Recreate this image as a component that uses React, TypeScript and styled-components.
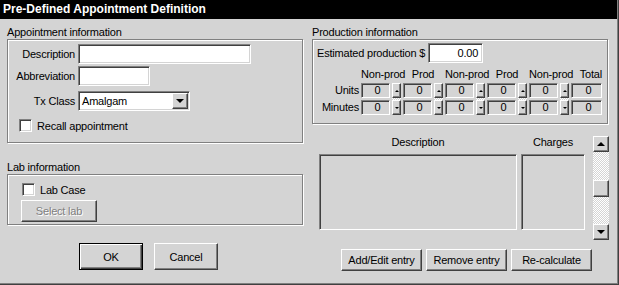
import * as React from "react";
import styled, { createGlobalStyle, css } from "styled-components";

const face = "#d4d4d4";
const shadow = "#808080";
const darkShadow = "#404040";

const GlobalStyle = createGlobalStyle`
  html, body {
    margin: 0;
    padding: 0;
    background: ${face};
  }
  body {
    font-family: "Liberation Sans", Arial, sans-serif;
    font-size: 11px;
    letter-spacing: -0.2px;
    color: #000;
  }
`;

const raised = css`
  border-style: solid;
  border-width: 1px;
  border-color: #fff ${darkShadow} ${darkShadow} #fff;
  box-shadow: inset -1px -1px ${shadow};
`;

const sunken = css`
  border-style: solid;
  border-width: 1px;
  border-color: ${shadow} #fff #fff ${shadow};
  box-shadow: inset 1px 1px ${darkShadow}, inset -1px -1px ${face};
`;

const hatch = css`
  background: repeating-conic-gradient(#fff 0 25%, ${face} 0 50%) 0 0 / 2px 2px;
`;

const Window = styled.div`
  width: 619px;
  height: 285px;
  box-sizing: border-box;
  padding: 0 2px 2px 0;
  background: ${face};
  box-shadow: inset -1px -1px ${darkShadow}, inset -2px -2px ${shadow};
  overflow: hidden;
`;

const TitleBar = styled.div`
  height: 19px;
  padding-left: 3px;
  background: #000;
  color: #fff;
  font-size: 12px;
  font-weight: bold;
  line-height: 19px;
  letter-spacing: 0;
`;

const Body = styled.div`
  display: flex;
  gap: 9px;
  padding: 7px 0 0 7px;
`;

const Column = styled.div<{ $w: number }>`
  width: ${(p) => p.$w}px;
  display: flex;
  flex-direction: column;
`;

const GroupLabel = styled.div<{ $mt?: number }>`
  height: 13px;
  line-height: 13px;
  margin-top: ${(p) => p.$mt || 0}px;
`;

const GroupBox = styled.div<{ $w: number; $h: number }>`
  box-sizing: border-box;
  width: ${(p) => p.$w}px;
  height: ${(p) => p.$h}px;
  border: 1px solid ${shadow};
  box-shadow: inset 1px 1px #fff, 1px 1px #fff;
  display: flex;
  flex-direction: column;
`;

const FieldRow = styled.div<{ $mt?: number }>`
  display: flex;
  align-items: center;
  height: 20px;
  margin-top: ${(p) => p.$mt || 0}px;
`;

const FieldLabel = styled.div`
  box-sizing: border-box;
  width: 70px;
  padding-right: 3px;
  text-align: right;
`;

const TextBox = styled.div<{ $w: number; $right?: boolean }>`
  box-sizing: border-box;
  width: ${(p) => p.$w}px;
  height: 20px;
  padding: 0 4px;
  background: #fff;
  line-height: 18px;
  text-align: ${(p) => (p.$right ? "right" : "left")};
  ${sunken};
`;

const SelectBox = styled.div`
  box-sizing: border-box;
  width: 112px;
  height: 20px;
  padding: 1px 1px 1px 3px;
  display: flex;
  align-items: center;
  justify-content: space-between;
  background: #fff;
  ${sunken};
`;

const ArrowButton = styled.div<{ $w: number; $h: number }>`
  box-sizing: border-box;
  width: ${(p) => p.$w}px;
  height: ${(p) => p.$h}px;
  display: flex;
  align-items: center;
  justify-content: center;
  background: ${face};
  ${raised};
`;

const Triangle = styled.span<{ $up?: boolean; $size: number }>`
  width: 0;
  height: 0;
  border-left: ${(p) => p.$size}px solid transparent;
  border-right: ${(p) => p.$size}px solid transparent;
  ${(p) =>
    p.$up
      ? css`border-bottom: ${p.$size}px solid #000;`
      : css`border-top: ${p.$size}px solid #000;`}
`;

const CheckRow = styled.div<{ $mt?: number; $pl: number }>`
  display: flex;
  align-items: center;
  gap: 5px;
  height: 13px;
  margin-top: ${(p) => p.$mt || 0}px;
  padding-left: ${(p) => p.$pl}px;
`;

const CheckBox = styled.span`
  box-sizing: border-box;
  width: 13px;
  height: 13px;
  background: #fff;
  ${sunken};
`;

const Button = styled.button<{ $w: number; $h: number; $default?: boolean }>`
  box-sizing: border-box;
  width: ${(p) => p.$w}px;
  height: ${(p) => p.$h}px;
  padding: 0;
  background: ${face};
  font: inherit;
  letter-spacing: inherit;
  color: #000;
  ${(p) =>
    p.$default
      ? css`
          border: 1px solid #000;
          box-shadow: inset 1px 1px #fff, inset -1px -1px ${darkShadow},
            inset -2px -2px ${shadow};
        `
      : raised};

  &:disabled {
    color: ${shadow};
    text-shadow: 1px 1px #fff;
  }
`;

const ButtonRow = styled.div<{ $mt: number; $gap: number }>`
  display: flex;
  gap: ${(p) => p.$gap}px;
  margin-top: ${(p) => p.$mt}px;
`;

const LeftButtons = styled(ButtonRow)`
  padding-left: 72px;
`;

const RightButtons = styled(ButtonRow)`
  justify-content: flex-end;
  padding-right: 17px;
`;

const Inset = styled.div<{ $pt?: number; $pl?: number }>`
  padding-top: ${(p) => p.$pt || 0}px;
  padding-left: ${(p) => p.$pl || 0}px;
`;

const EstimateRow = styled.div`
  display: flex;
  align-items: center;
  gap: 3px;
  height: 20px;
`;

const Grid = styled.div`
  display: grid;
  grid-template-columns: 42px repeat(5, 29px 9px) 31px;
  grid-template-rows: 13px 15px 15px;
  column-gap: 2px;
  row-gap: 2px;
  margin-top: 5px;
  line-height: 13px;
`;

const ColHead = styled.div<{ $span: number; $right?: boolean }>`
  grid-column: span ${(p) => p.$span};
  text-align: ${(p) => (p.$right ? "right" : "center")};
  white-space: nowrap;
`;

const RowHead = styled.div`
  grid-column: 1;
  text-align: right;
  line-height: 15px;
`;

const Cell = styled.div`
  box-sizing: border-box;
  height: 15px;
  padding-left: 4px;
  text-align: center;
  line-height: 13px;
  ${sunken};
`;

const Spinner = styled.div<{ $col: number }>`
  grid-column: ${(p) => p.$col};
  grid-row: 2 / 4;
  display: flex;
  flex-direction: column;
  ${hatch};
`;

const SpinFill = styled.div`
  flex: 1;
`;

const ListArea = styled.div`
  display: flex;
  margin-top: 12px;
`;

const Lists = styled.div`
  display: grid;
  grid-template-columns: 198px 64px;
  grid-template-rows: 13px 76px;
  column-gap: 4px;
  row-gap: 5px;
  padding-left: 7px;
  line-height: 13px;
`;

const ListHead = styled.div`
  text-align: center;
`;

const ListBox = styled.div`
  box-sizing: border-box;
  ${sunken};
`;

const ScrollBar = styled.div`
  width: 16px;
  height: 104px;
  margin-left: 8px;
  display: flex;
  flex-direction: column;
  ${hatch};
`;

const Track = styled.div`
  flex: 1;
  padding-top: 28px;
`;

const Thumb = styled.div`
  box-sizing: border-box;
  height: 17px;
  background: ${face};
  ${raised};
`;

const cols = ["Non-prod", "Prod", "Non-prod", "Prod", "Non-prod"];

interface IValueRowProps {
  label: string;
  row: number;
}

const ValueRow = ({ label, row }: IValueRowProps) => (
  <>
    <RowHead style={{ gridRow: row }}>{label}</RowHead>
    {cols.map((_, i) => (
      <Cell key={i} style={{ gridRow: row, gridColumn: 2 + i * 2 }}>
        0
      </Cell>
    ))}
    <Cell style={{ gridRow: row, gridColumn: 12 }}>0</Cell>
  </>
);

const App = () => (
  <Window>
    <GlobalStyle />
    <TitleBar>Pre-Defined Appointment Definition</TitleBar>
    <Body>
      <Column $w={296}>
        <GroupLabel>Appointment information</GroupLabel>
        <GroupBox $w={296} $h={104}>
          <FieldRow $mt={4}>
            <FieldLabel>Description</FieldLabel>
            <TextBox $w={173} />
          </FieldRow>
          <FieldRow $mt={2}>
            <FieldLabel>Abbreviation</FieldLabel>
            <TextBox $w={72} />
          </FieldRow>
          <FieldRow $mt={5}>
            <FieldLabel>Tx Class</FieldLabel>
            <SelectBox>
              Amalgam
              <ArrowButton $w={16} $h={16}>
                <Triangle $size={4} />
              </ArrowButton>
            </SelectBox>
          </FieldRow>
          <CheckRow $mt={8} $pl={11}>
            <CheckBox />
            Recall appointment
          </CheckRow>
        </GroupBox>

        <GroupLabel $mt={18}>Lab information</GroupLabel>
        <GroupBox $w={296} $h={51}>
          <CheckRow $mt={8} $pl={14}>
            <CheckBox />
            Lab Case
          </CheckRow>
          <Inset $pt={4} $pl={13}>
            <Button $w={76} $h={22} disabled>
              Select lab
            </Button>
          </Inset>
        </GroupBox>

        <LeftButtons $mt={18} $gap={11}>
          <Button $w={64} $h={27} $default>
            OK
          </Button>
          <Button $w={64} $h={27}>
            Cancel
          </Button>
        </LeftButtons>
      </Column>

      <Column $w={297}>
        <GroupLabel>Production information</GroupLabel>
        <GroupBox $w={296} $h={85}>
          <Inset $pt={3} $pl={4}>
            <EstimateRow>
              Estimated production $
              <TextBox $w={55} $right>
                0.00
              </TextBox>
            </EstimateRow>
            <Grid>
              <div />
              {cols.map((c, i) => (
                <ColHead key={i} $span={2}>
                  {c}
                </ColHead>
              ))}
              <ColHead $span={1} $right>
                Total
              </ColHead>
              <ValueRow label="Units" row={2} />
              <ValueRow label="Minutes" row={3} />
              {cols.map((_, i) => (
                <Spinner key={i} $col={3 + i * 2}>
                  <ArrowButton $w={9} $h={15}>
                    <Triangle $up $size={2} />
                  </ArrowButton>
                  <SpinFill />
                  <ArrowButton $w={9} $h={15}>
                    <Triangle $size={2} />
                  </ArrowButton>
                </Spinner>
              ))}
            </Grid>
          </Inset>
        </GroupBox>

        <ListArea>
          <Lists>
            <ListHead>Description</ListHead>
            <ListHead>Charges</ListHead>
            <ListBox />
            <ListBox />
          </Lists>
          <ScrollBar>
            <ArrowButton $w={16} $h={16}>
              <Triangle $up $size={4} />
            </ArrowButton>
            <Track>
              <Thumb />
            </Track>
            <ArrowButton $w={16} $h={16}>
              <Triangle $size={4} />
            </ArrowButton>
          </ScrollBar>
        </ListArea>

        <RightButtons $mt={9} $gap={4}>
          <Button $w={81} $h={22}>
            Add/Edit entry
          </Button>
          <Button $w={81} $h={22}>
            Remove entry
          </Button>
          <Button $w={81} $h={22}>
            Re-calculate
          </Button>
        </RightButtons>
      </Column>
    </Body>
  </Window>
);

export default App;
